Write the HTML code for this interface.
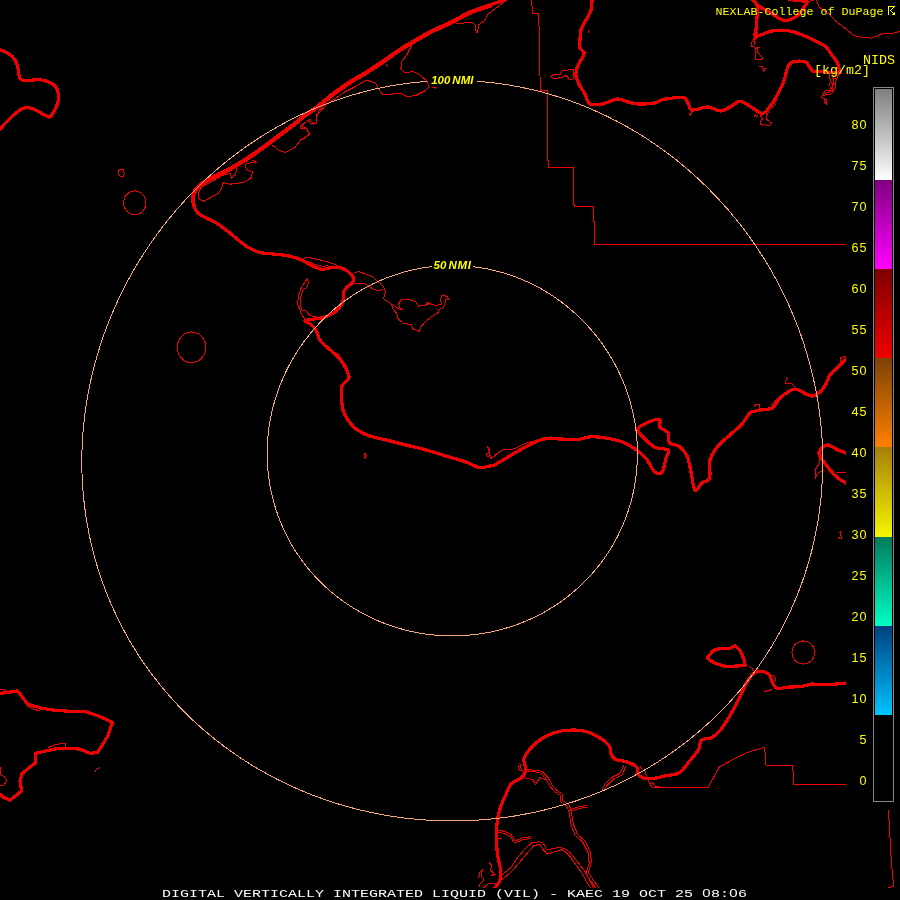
<!DOCTYPE html>
<html><head><meta charset="utf-8"><title>NEXLAB KAEC DVL</title>
<style>
html,body{margin:0;padding:0;background:#000;}
body{width:900px;height:900px;overflow:hidden;position:relative;}
svg{position:absolute;left:0;top:0;display:block;will-change:transform;}
.thick path{fill:none;stroke:#f00000;stroke-width:3.2;stroke-linejoin:round;stroke-linecap:round;shape-rendering:crispEdges;}
.thin path{fill:none;stroke:#f00000;stroke-width:1;stroke-linejoin:round;shape-rendering:crispEdges;}
.ring{fill:none;stroke:#f8a67e;stroke-width:1;shape-rendering:crispEdges;}
.lab{font-family:"Liberation Mono",monospace;font-size:13.33px;fill:#ff0;}
.z{font-family:"Liberation Sans",sans-serif;}
.lab2{font-family:"Liberation Sans",sans-serif;font-size:12.6px;fill:#ff0;}
.hdr{font-family:"Liberation Mono",monospace;font-size:11.67px;fill:#ff0;}
.nmi{font-family:"Liberation Sans",sans-serif;font-weight:bold;font-style:italic;font-size:11.5px;word-spacing:-1.2px;fill:#ff0;}
.ttl{font-family:"Liberation Mono",monospace;font-size:11.7px;fill:#fff;}
</style></head>
<body>
<svg width="900" height="900" viewBox="0 0 900 900">
<defs><linearGradient id="g0" x1="0" y1="0" x2="0" y2="1"><stop offset="0" stop-color="#7f7f7f"/><stop offset="1" stop-color="#ffffff"/></linearGradient><linearGradient id="g1" x1="0" y1="0" x2="0" y2="1"><stop offset="0" stop-color="#7f007f"/><stop offset="1" stop-color="#ff00ff"/></linearGradient><linearGradient id="g2" x1="0" y1="0" x2="0" y2="1"><stop offset="0" stop-color="#7f0000"/><stop offset="1" stop-color="#ee0000"/></linearGradient><linearGradient id="g3" x1="0" y1="0" x2="0" y2="1"><stop offset="0" stop-color="#7c4206"/><stop offset="1" stop-color="#ff8000"/></linearGradient><linearGradient id="g4" x1="0" y1="0" x2="0" y2="1"><stop offset="0" stop-color="#a67f08"/><stop offset="1" stop-color="#f6f600"/></linearGradient><linearGradient id="g5" x1="0" y1="0" x2="0" y2="1"><stop offset="0" stop-color="#007a5c"/><stop offset="1" stop-color="#00ffc4"/></linearGradient><linearGradient id="g6" x1="0" y1="0" x2="0" y2="1"><stop offset="0" stop-color="#00407f"/><stop offset="1" stop-color="#00c4ff"/></linearGradient>
<clipPath id="mapclip"><rect x="0" y="0" width="900" height="888"/></clipPath>
</defs>
<rect x="0" y="0" width="900" height="900" fill="#000"/>
<g clip-path="url(#mapclip)">
<g class="thin">
<path d="M119.0 170.5 C119.4 169.8 120.2 169.6 121.0 169.5 C121.8 169.4 123.0 168.9 123.5 170.0 C124.0 171.1 124.3 174.9 123.8 176.0 C123.3 177.1 121.3 176.8 120.5 176.5 C119.7 176.2 119.0 175.0 118.7 174.0 C118.5 173.0 118.6 171.2 119.0 170.5 Z"/>
<path d="M146.0 202.8 L145.6 205.9 L144.5 208.8 L142.7 211.2 L140.4 213.1 L137.7 214.3 L134.8 214.7 L131.9 214.3 L129.2 213.1 L126.9 211.2 L125.1 208.8 L124.0 205.9 L123.6 202.8 L124.0 199.7 L125.1 196.9 L126.9 194.4 L129.2 192.5 L131.9 191.3 L134.8 190.9 L137.7 191.3 L140.4 192.5 L142.7 194.4 L144.5 196.8 L145.6 199.7 Z"/>
<path d="M205.8 347.3 L205.3 351.3 L203.9 354.9 L201.6 358.1 L198.7 360.6 L195.2 362.1 L191.5 362.6 L187.8 362.1 L184.3 360.6 L181.4 358.1 L179.1 354.9 L177.7 351.3 L177.2 347.3 L177.7 343.3 L179.1 339.7 L181.4 336.5 L184.3 334.0 L187.8 332.5 L191.5 332.0 L195.2 332.5 L198.7 334.0 L201.6 336.5 L203.9 339.6 L205.3 343.3 Z"/>
<path d="M814.7 652.5 L814.3 655.5 L813.2 658.3 L811.4 660.7 L809.0 662.5 L806.3 663.7 L803.3 664.1 L800.3 663.7 L797.6 662.5 L795.2 660.7 L793.4 658.3 L792.3 655.5 L791.9 652.5 L792.3 649.5 L793.4 646.7 L795.2 644.3 L797.6 642.5 L800.3 641.3 L803.3 640.9 L806.3 641.3 L809.0 642.5 L811.4 644.3 L813.2 646.7 L814.3 649.5 Z"/>
<path d="M201.7 186.7 L198.3 193.3 L199.2 199.2 L204.2 201.3 L211.7 196.7 L218.3 193.3 L221.7 188.3 L223.3 182.5 L230.0 184.2 L243.3 182.5 L250.8 178.3 L252.5 171.7 L246.7 170.0 L245.0 164.2 L251.7 162.5 L256.7 162.5 L251.7 159.7"/>
<path d="M201.7 186.7 L211.7 181.7 L221.7 175.8 L230.0 173.3 L231.7 178.3 L235.8 173.3 L236.7 167.5"/>
<path d="M272.5 145.0 L278.3 150.0 L285.0 152.5 L295.0 147.5 L300.0 140.8 L306.7 136.7 L309.2 133.3 L306.7 128.3 L300.0 125.8 L310.0 119.2 L313.3 124.2 L316.7 123.3 L316.7 115.8 L321.7 110.0 L326.7 104.2"/>
<path d="M411.7 45.0 L406.7 55.0 L401.7 61.7 L400.8 68.3 L404.2 72.5 L413.3 71.7 L420.0 75.0 L426.7 80.8 L429.2 86.7 L425.0 90.8 L420.0 93.3 L415.0 95.8 L406.7 96.3 L400.0 93.0 L391.7 94.2 L382.5 94.2 L378.3 88.3 L375.8 83.3 L366.7 80.0 L355.0 86.7 L345.0 91.7 L333.3 100.0 L321.7 106.7 L316.7 115.0 L316.7 123.3 L310.0 123.3 L308.3 120.0 L300.0 128.3 L306.7 128.3 L309.2 135.0 L300.0 140.0"/>
<path d="M386.0 64.5 L387.5 67.0"/>
<path d="M431.5 87.5 L436.5 87.5 L435.5 89.0"/>
<path d="M456.0 24.0 L472.0 22.0 L475.0 25.0 L475.0 30.0 L477.4 33.0 L478.6 25.0 L485.0 20.0 L488.0 14.0 L499.0 6.0 L507.0 0.0"/>
<path d="M531.6 -1.0 L532.4 13.0 L538.6 13.0 L539.6 44.0 L540.0 76.0 L540.4 90.4 L547.5 90.4 L547.5 160.5 L548.5 161.0 L548.5 167.2 L573.5 167.2 L573.5 204.0 L574.5 204.5 L574.5 206.2 L593.5 206.2 L593.5 221.5 L594.5 222.0 L594.5 244.5 L846.5 244.5"/>
<path d="M550.0 76.4 L556.0 74.0 L560.0 75.0 L562.0 71.0 L568.0 70.0 L574.0 69.4 L573.0 79.0 L569.0 79.0 L566.0 75.0 L563.0 77.0 L558.0 78.0 L553.0 78.0 L550.0 76.4"/>
<path d="M588.0 30.0 L588.5 33.0"/>
<path d="M584.0 52.0 L587.0 53.0"/>
<path d="M806.7 1.8 L812.0 0.5 L816.4 -1.0"/>
<path d="M816.4 -1.0 L819.0 7.0 L829.0 14.2 L836.0 21.3 L845.0 28.4 L853.8 35.5 L862.7 37.3 L871.5 38.2 L882.0 33.8 L891.0 33.8 L898.0 32.0 L901.0 31.0"/>
<path d="M754.0 39.3 L751.0 43.7 L751.7 46.7 L753.7 47.0 L754.3 43.0 L755.3 42.3 Z"/>
<path d="M753.7 47.0 L755.3 48.3 L755.3 59.7 L761.0 59.7 L762.7 58.0 L757.3 51.7 L758.0 47.7 L759.5 47.3 L755.3 48.3"/>
<path d="M759.3 67.0 L762.0 66.5 L763.0 68.0 L766.0 69.0 L763.3 71.7 L762.7 69.0"/>
<path d="M830.0 73.3 L829.3 76.7 L830.7 81.3 L829.3 85.3 L831.3 87.3 L830.7 90.0 L825.3 90.7 L823.3 93.3 L821.3 97.3 L824.0 98.7 L824.7 102.0 L826.7 104.7 L826.7 99.3 L824.0 98.7"/>
<path d="M838.5 74.5 L837.3 76.7 L836.0 81.3 L835.3 87.3 L833.3 91.3 L831.3 94.0 L826.7 94.0 L823.3 96.0"/>
<path d="M834.0 74.5 L833.3 78.0 L833.3 83.3 L832.0 87.3 L832.7 90.0 L828.7 92.0 L825.3 93.3"/>
<path d="M832.0 78.7 L836.7 78.7"/>
<path d="M831.0 83.5 L835.5 85.0"/>
<path d="M760.0 115.3 L762.7 118.7 L761.3 120.0 L760.0 124.0 L762.7 125.3 L764.0 124.0 L766.7 125.3 L770.0 125.0 L771.7 123.3 L769.3 121.3 L766.7 119.3 L766.3 115.3 L769.3 111.3"/>
<path d="M754.3 116.7 L756.0 114.0"/>
<path d="M756.3 117.7 L758.0 115.3"/>
<path d="M771.3 108.7 L775.3 104.7 L774.0 102.0 L776.7 100.7"/>
<path d="M692.0 110.0 L690.5 116.0 L689.5 113.0"/>
<path d="M305.0 320.0 L300.8 312.5 L297.5 303.3 L299.2 293.3 L301.7 286.7 L307.5 278.3 L308.3 282.5 L307.0 287.5 L303.3 289.2 L300.8 296.7 L300.0 305.0 L302.5 310.8 L305.8 310.8 L310.0 315.8 L316.7 316.7"/>
<path d="M303.3 258.3 L308.3 257.5 L320.0 260.0 L330.0 262.5 L338.3 265.8"/>
<path d="M308.3 261.7 L316.7 265.0 L323.3 266.7 L328.3 265.0"/>
<path d="M354.0 273.0 L358.7 271.3 L364.7 274.0 L372.7 276.7 L376.7 280.7 L382.0 284.7 L384.7 288.7 L385.3 293.3 L383.3 298.7 L387.3 301.3 L391.3 304.0 L392.7 308.7 L396.7 313.3 L398.0 318.7 L403.3 323.3 L411.3 324.7 L412.7 328.7 L419.3 331.3 L420.7 327.3 L426.0 320.7 L432.7 316.0 L438.0 312.7 L439.3 309.3 L443.3 308.0 L444.7 304.0 L446.0 298.7 L448.7 300.0 L447.3 296.7 L442.0 294.7 L440.7 298.7 L441.3 304.7 L435.3 305.3 L431.3 304.0 L426.0 302.0 L428.7 304.0 L424.7 305.3 L418.7 306.3 L415.3 301.3 L408.7 299.3 L400.7 300.0 L398.7 304.0 L400.0 308.0 L402.7 309.3 L400.7 310.0 L395.3 306.7 L391.3 304.0"/>
<path d="M355.3 284.0 L363.3 283.3 L368.7 286.0 L373.3 289.3 L378.0 290.7 L383.3 289.3"/>
<path d="M364.0 454.0 L365.5 453.5 L366.5 456.0 L365.5 458.5 L364.0 457.5 Z"/>
<path d="M488.0 447.0 L489.0 449.0 L490.0 452.0 L487.0 453.5 L486.0 455.0 L488.0 457.0 L490.0 455.5 L492.0 458.0 L496.0 454.0 L504.0 449.4 L510.0 449.4"/>
<path d="M487.3 446.5 L489.0 451.0 L491.0 458.7 L502.0 450.1 L514.2 448.9 L524.0 444.0 L537.0 440.0 L550.9 436.7"/>
<path d="M338.0 357.0 L342.0 360.0 L346.0 366.0 L349.0 372.0 L347.0 369.0"/>
<path d="M336.7 353.0 L340.0 356.7 L343.3 362.0 L346.5 366.0"/>
<path d="M786.0 377.0 L787.5 378.5 L785.0 383.0 L792.0 384.0 L794.0 386.0 L796.0 388.0"/>
<path d="M754.0 406.5 L756.0 404.5 L760.0 405.0 L759.0 408.0"/>
<path d="M771.0 405.0 L776.0 400.0 L782.0 396.0 L788.0 394.0"/>
<path d="M840.0 362.0 L840.5 358.0 L844.0 356.5 L847.0 357.0"/>
<path d="M819.0 456.0 L819.0 464.0 L815.0 470.0 L815.0 479.0 L818.0 473.0 L824.0 470.0"/>
<path d="M836.0 472.5 L847.0 472.5"/>
<path d="M839.0 533.0 L840.5 532.0 L841.0 536.0 L842.0 538.0 L840.0 539.0 L838.5 537.0"/>
<path d="M763.5 692.1 L768.0 690.5 L772.0 689.7"/>
<path d="M748.8 666.5 L752.0 668.0 L754.0 671.0"/>
<path d="M769.0 675.0 L774.0 676.0 L776.0 680.0 L773.0 683.0"/>
<path d="M640.0 766.7 L645.0 772.0 L648.0 780.0 L652.2 787.5 L708.0 787.5 L719.5 766.7 L745.1 753.3 L764.7 747.1 L765.9 765.0 L792.8 765.0 L793.5 784.3 L846.5 784.3"/>
<path d="M651.5 781.8 L655.0 786.0 L660.0 787.0"/>
<path d="M888.5 810.2 L889.3 825.5 L890.3 843.2 L891.3 860.9 L892.4 873.1 L893.3 882.3 L893.3 886.6 L888.1 887.4"/>
<path d="M525.9 769.1 L533.3 770.2 L541.8 771.2 L548.1 777.6 L551.3 783.9 L556.6 790.2 L562.9 794.4 L562.9 800.8 L569.2 805.0 L571.3 811.3 L573.4 824.0 L577.7 834.6 L585.0 840.9 L590.3 851.4 L591.4 862.0 L588.2 872.6 L592.4 878.9 L598.8 887.3 L600.0 890.0"/>
<path d="M523.7 770.3 L531.1 771.4 L539.6 772.4 L545.9 778.8 L549.1 785.1 L554.4 791.4 L560.7 795.6 L560.7 802.0 L567.0 806.2 L569.1 812.5 L571.2 825.2 L575.5 835.8 L582.8 842.1 L588.1 852.6 L589.2 863.2 L586.0 873.8 L590.2 880.1 L596.6 888.5 L597.8 891.2"/>
<path d="M571.3 809.2 L577.7 807.1 L587.2 805.0"/>
<path d="M572.0 811.0 L578.0 809.0 L587.5 806.8"/>
<path d="M522.8 777.6 L533.3 779.7 L535.4 784.9 L539.7 777.6 L546.0 779.7"/>
<path d="M519.6 762.8 L521.0 768.0 L522.8 771.2 L519.0 770.0 L518.0 765.0"/>
<path d="M624.1 764.9 L619.9 773.3 L611.4 777.6 L605.1 783.9 L601.9 790.2"/>
<path d="M626.0 766.0 L622.0 775.0 L613.5 779.0 L607.0 785.5 L604.0 790.5"/>
<path d="M498.5 830.3 L504.8 831.4 L511.2 834.6 L515.4 840.9 L522.8 837.7 L531.2 836.7"/>
<path d="M498.5 832.3 L504.5 833.4 L510.0 836.6 L514.8 843.0 L523.0 839.7 L531.2 838.2"/>
<path d="M497.0 839.0 L502.0 838.5"/>
<path d="M500.5 876.0 L503.4 873.6 L510.4 868.2 L516.7 858.9 L524.4 849.5 L532.2 842.5 L540.0 841.8 L544.7 844.9 L546.2 849.5 L552.4 848.8 L560.2 847.2 L566.4 849.5 L570.0 852.6 L578.5 863.0 L585.0 871.5 L589.5 880.0 L593.5 887.3 L595.0 890.0"/>
<path d="M500.5 880.5 L503.4 878.3 L510.4 872.9 L519.8 862.0 L527.6 852.7 L533.8 845.7 L540.0 844.1 L543.1 849.6 L547.8 854.2 L554.0 851.9 L561.8 849.6 L566.4 852.7 L570.0 856.6 L576.5 865.5 L582.5 874.0 L586.5 882.0 L590.5 888.0 L591.5 890.0"/>
<path d="M478.4 878.0 L480.0 872.0 L483.0 869.0 L481.0 875.0 L484.0 880.0 L480.0 884.0 L479.0 887.0"/>
<path d="M489.0 862.0 L492.0 866.0 L490.0 870.0 L494.0 873.0 L491.0 876.0 L496.0 874.0"/>
<path d="M482.0 889.0 L488.0 884.0 L495.0 883.0"/>
<path d="M0.0 766.7 L0.8 775.0 L5.0 776.7 L6.7 780.8 L4.2 785.0 L0.0 785.0"/>
<path d="M95.0 771.7 L97.0 769.0 L100.0 767.5"/>
<path d="M48.3 747.5 L55.0 744.5 L65.0 743.3 L65.5 747.0"/>
<path d="M27.5 706.0 L33.0 709.0 L40.0 711.0"/>
<path d="M0.0 690.0 L4.0 689.5 L7.0 691.0"/>
</g>
<g class="thick">
<path d="M-2.0 49.0 C-1.7 49.1 -1.4 49.1 0.0 49.7 C1.4 50.3 4.6 51.3 6.7 52.5 C8.8 53.7 10.8 54.9 12.5 56.7 C14.2 58.5 15.7 60.8 16.7 63.3 C17.7 65.8 18.2 69.2 18.7 71.7 C19.2 74.2 18.6 76.8 19.7 78.3 C20.8 79.8 22.7 80.5 25.0 80.8 C27.3 81.1 30.5 80.1 33.3 80.0 C36.1 79.9 38.9 79.6 41.7 80.0 C44.5 80.4 47.6 81.4 50.0 82.5 C52.4 83.6 54.4 84.9 55.8 86.7 C57.2 88.5 57.9 91.1 58.3 93.3 C58.7 95.5 58.7 97.5 58.3 100.0 C57.9 102.5 56.9 105.8 55.8 108.3 C54.7 110.8 52.8 113.5 51.7 115.0 C50.6 116.5 51.2 117.4 49.2 117.0 C47.2 116.6 42.9 114.0 40.0 112.5 C37.1 111.0 34.5 109.0 31.7 108.3 C28.9 107.6 25.8 107.6 23.3 108.3 C20.8 109.0 19.2 110.5 16.7 112.5 C14.2 114.5 11.1 117.2 8.3 120.0 C5.5 122.8 1.7 127.2 0.0 129.0 C-1.7 130.8 -1.7 130.7 -2.0 131.0"/>
<path d="M505.0 -2.0 C504.8 -1.7 506.5 -1.2 504.0 0.0 C501.5 1.2 495.7 3.0 490.0 5.0 C484.3 7.0 476.7 9.1 470.0 12.0 C463.3 14.9 456.1 19.5 450.0 22.5 C443.9 25.5 438.9 27.2 433.3 30.0 C427.8 32.8 422.2 36.0 416.7 39.2 C411.1 42.4 405.6 45.6 400.0 49.2 C394.4 52.8 388.9 57.0 383.3 60.8 C377.8 64.5 372.2 68.2 366.7 71.7 C361.1 75.2 355.6 78.1 350.0 81.7 C344.4 85.3 338.9 89.1 333.3 93.3 C327.8 97.5 322.2 102.5 316.7 106.7 C311.1 110.9 303.3 115.8 300.0 118.3 C296.7 120.8 300.0 119.1 296.7 121.7 C293.4 124.3 285.6 130.0 280.0 134.2 C274.4 138.4 268.9 142.7 263.3 146.7 C257.8 150.7 252.2 154.7 246.7 158.3 C241.1 161.9 235.6 165.2 230.0 168.3 C224.4 171.4 218.0 174.2 213.3 176.7 C208.6 179.2 204.8 181.1 201.7 183.3 C198.6 185.5 196.5 187.5 195.0 190.0 C193.5 192.5 192.6 195.5 192.5 198.3 C192.4 201.1 193.2 204.2 194.2 206.7 C195.2 209.2 196.2 211.4 198.3 213.3 C200.4 215.2 203.6 216.6 206.7 218.3 C209.8 220.0 213.1 221.1 216.7 223.3 C220.3 225.5 224.7 228.9 228.3 231.7 C231.9 234.5 235.0 237.4 238.3 240.0 C241.6 242.6 244.7 245.4 248.3 247.5 C251.9 249.6 255.6 251.4 260.0 252.5 C264.4 253.6 270.3 253.6 275.0 254.2 C279.7 254.8 283.9 254.8 288.3 255.8 C292.8 256.8 297.8 258.3 301.7 260.0 C305.6 261.7 308.4 264.3 311.7 265.8 C315.0 267.3 318.4 268.9 321.7 269.2 C325.0 269.5 328.6 267.8 331.7 267.5 C334.8 267.2 337.2 266.8 340.0 267.5 C342.8 268.2 346.1 270.0 348.3 271.7 C350.5 273.4 352.6 275.7 353.3 277.5 C354.0 279.3 353.6 280.8 352.5 282.5 C351.4 284.2 348.2 285.7 346.7 287.5 C345.2 289.3 343.9 291.2 343.3 293.3 C342.7 295.4 343.9 297.8 343.3 300.0 C342.8 302.2 341.7 304.5 340.0 306.7 C338.3 308.9 336.1 311.5 333.3 313.3 C330.5 315.1 326.6 316.5 323.3 317.5 C320.0 318.5 316.4 318.6 313.3 319.2 C310.2 319.8 305.3 319.8 305.0 320.8 C304.7 321.8 309.8 323.2 311.7 325.0 C313.6 326.8 315.3 329.2 316.7 331.7 C318.1 334.2 318.1 337.2 320.0 340.0 C321.9 342.8 325.3 345.5 328.3 348.3 C331.3 351.1 335.2 353.9 338.0 357.0 C340.8 360.1 343.2 363.5 345.0 367.0 C346.8 370.5 349.5 374.8 349.0 378.0 C348.5 381.2 343.2 382.7 342.0 386.0 C340.8 389.3 341.4 394.0 341.6 398.0 C341.8 402.0 341.9 406.3 343.0 410.0 C344.1 413.7 345.8 416.8 348.0 420.0 C350.2 423.2 352.3 426.3 356.0 429.0 C359.7 431.7 365.0 434.2 370.0 436.0 C375.0 437.8 380.0 438.5 386.0 440.0 C392.0 441.5 399.3 443.3 406.0 445.0 C412.7 446.7 419.3 448.2 426.0 450.0 C432.7 451.8 439.3 454.0 446.0 456.0 C452.7 458.0 460.5 460.1 466.0 462.0 C471.5 463.9 475.0 466.7 479.0 467.4 C483.0 468.1 487.4 466.4 490.0 466.0 C492.6 465.6 491.5 466.4 494.7 464.8 C497.9 463.2 503.6 459.5 509.3 456.2 C515.0 452.9 523.2 448.0 528.9 445.2 C534.6 442.4 537.9 440.1 543.6 439.1 C549.3 438.1 557.4 439.0 563.1 439.1 C568.8 439.2 573.1 440.0 577.8 439.6 C582.5 439.2 585.5 436.8 591.2 436.7 C596.9 436.6 606.5 438.1 612.0 439.1 C617.5 440.1 620.1 441.0 624.2 442.8 C628.3 444.6 632.8 447.5 636.5 450.1 C640.2 452.8 643.2 455.0 646.3 458.7 C649.3 462.4 652.1 469.9 654.8 472.1 C657.4 474.3 660.4 474.3 662.2 472.1 C664.0 469.9 664.8 462.4 665.8 458.7 C666.8 455.0 669.9 451.9 668.3 450.1 C666.7 448.3 659.7 449.3 656.0 447.7 C652.3 446.1 649.3 443.4 646.3 440.3 C643.2 437.2 637.3 432.4 637.7 429.3 C638.1 426.2 645.0 423.6 648.7 422.0 C652.4 420.4 657.9 418.8 659.7 419.6 C661.5 420.4 658.3 424.7 659.7 426.9 C661.1 429.1 666.7 430.4 668.3 433.0 C669.9 435.6 667.7 440.6 669.5 442.8 C671.3 445.1 676.4 444.3 679.3 446.5 C682.2 448.7 685.0 451.8 687.0 456.0 C689.0 460.2 689.7 466.3 691.0 472.0 C692.3 477.7 693.2 488.2 695.0 490.0 C696.8 491.8 699.6 485.0 702.0 483.0 C704.4 481.0 708.3 481.8 709.6 478.0 C710.9 474.2 708.6 465.3 710.0 460.0 C711.4 454.7 714.7 450.2 718.0 446.0 C721.3 441.8 726.0 438.7 730.0 435.0 C734.0 431.3 738.7 427.7 742.0 424.0 C745.3 420.3 747.0 415.3 750.0 413.0 C753.0 410.7 756.3 410.8 760.0 410.0 C763.7 409.2 768.7 410.0 772.0 408.0 C775.3 406.0 777.3 400.7 780.0 398.0 C782.7 395.3 785.3 393.5 788.0 392.0 C790.7 390.5 793.3 388.8 796.0 389.0 C798.7 389.2 801.3 391.8 804.0 393.0 C806.7 394.2 809.3 396.2 812.0 396.0 C814.7 395.8 817.7 394.0 820.0 392.0 C822.3 390.0 824.3 386.8 826.0 384.0 C827.7 381.2 828.0 377.8 830.0 375.0 C832.0 372.2 835.5 369.5 838.0 367.0 C840.5 364.5 843.3 361.7 845.0 360.0 C846.7 358.3 847.5 357.5 848.0 357.0"/>
<path d="M490.6 5.9 C487.3 7.1 477.3 10.0 470.6 12.9 C463.9 15.8 456.7 20.4 450.6 23.4 C444.5 26.4 439.5 28.1 433.9 30.9 C428.4 33.7 422.9 36.9 417.3 40.1 C411.8 43.3 406.2 46.5 400.6 50.1 C395.0 53.7 389.5 57.9 383.9 61.7 C378.4 65.5 372.9 69.1 367.3 72.6 C361.8 76.1 356.2 79.0 350.6 82.6 C345.0 86.2 339.5 90.0 333.9 94.2 C328.4 98.4 322.9 103.4 317.3 107.6 C311.8 111.8 303.9 116.7 300.6 119.2 C297.3 121.7 300.6 120.0 297.3 122.6 C294.0 125.2 286.2 130.9 280.6 135.1 C275.0 139.3 269.5 143.6 263.9 147.6 C258.4 151.6 252.8 155.6 247.3 159.2 C241.7 162.8 236.2 166.1 230.6 169.2 C225.0 172.3 218.6 175.1 213.9 177.6 C209.2 180.1 205.3 182.0 202.3 184.2 C199.2 186.4 197.1 188.4 195.6 190.9 C194.1 193.4 193.2 196.4 193.1 199.2 C193.0 202.0 194.5 206.2 194.8 207.6"/>
<path d="M592.0 -2.0 C592.0 -1.7 592.2 -2.0 592.0 0.0 C591.8 2.0 592.0 6.7 591.0 10.0 C590.0 13.3 587.7 16.7 586.0 20.0 C584.3 23.3 582.0 26.7 581.0 30.0 C580.0 33.3 580.2 37.0 580.0 40.0 C579.8 43.0 579.3 45.8 580.0 48.0 C580.7 50.2 583.8 51.0 584.0 53.0 C584.2 55.0 582.2 57.5 581.0 60.0 C579.8 62.5 577.8 65.3 577.0 68.0 C576.2 70.7 575.5 73.0 576.0 76.0 C576.5 79.0 578.5 83.0 580.0 86.0 C581.5 89.0 583.3 91.0 585.0 94.0 C586.7 97.0 587.2 102.3 590.0 104.0 C592.8 105.7 597.3 104.8 602.0 104.0 C606.7 103.2 613.7 99.3 618.0 99.0 C622.3 98.7 624.7 101.2 628.0 102.0 C631.3 102.8 633.7 103.8 638.0 104.0 C642.3 104.2 649.7 103.8 654.0 103.0 C658.3 102.2 659.2 100.3 664.0 99.4 C668.8 98.5 679.0 96.8 683.0 97.4 C687.0 98.0 686.5 100.9 688.0 103.0 C689.5 105.1 688.7 109.3 692.0 110.0 C695.3 110.7 703.3 106.8 708.0 107.0 C712.7 107.2 716.3 111.0 720.0 111.0 C723.7 111.0 726.7 108.6 730.0 107.0 C733.3 105.4 736.5 101.5 740.0 101.5 C743.5 101.5 747.0 104.7 750.7 106.7 C754.5 108.7 759.1 113.8 762.5 113.5 C765.9 113.2 768.3 108.5 771.0 105.0 C773.7 101.5 776.5 96.6 778.7 92.4 C780.9 88.2 782.8 84.1 784.3 80.0 C785.8 75.9 786.1 70.6 787.5 67.6 C788.9 64.6 789.5 62.9 792.5 62.0 C795.5 61.1 802.2 60.5 805.5 62.0 C808.8 63.5 810.1 69.2 812.5 70.8 C814.9 72.4 815.6 71.3 820.0 71.6 C824.4 71.9 835.4 72.6 838.7 72.5 C842.0 72.4 839.9 72.8 839.6 71.0 C839.3 69.2 838.3 64.7 837.0 62.0 C835.7 59.3 833.6 57.5 831.8 55.0 C830.0 52.5 828.6 49.2 826.2 47.0 C823.8 44.8 820.9 43.6 817.5 41.8 C814.1 40.0 810.4 38.2 805.8 36.4 C801.2 34.6 795.4 31.9 789.8 31.0 C784.2 30.1 777.6 30.1 772.0 31.0 C766.4 31.9 758.7 36.6 756.0 36.4 C753.3 36.2 755.8 33.1 756.0 30.0 C756.2 26.9 756.8 21.9 757.0 17.8 C757.2 13.7 758.0 8.6 757.0 5.3 C756.0 2.0 752.0 -0.8 751.0 -2.0"/>
<path d="M750.7 -2.0 C751.9 -0.8 754.6 2.9 757.8 5.3 C761.0 7.7 765.6 9.9 770.0 12.4 C774.4 14.9 779.9 19.8 784.4 20.4 C788.9 21.0 793.7 18.2 797.0 16.0 C800.3 13.8 802.4 9.4 804.0 7.0 C805.6 4.6 807.9 2.9 806.7 1.8 C805.5 0.7 800.1 1.0 797.0 0.5 C793.9 0.0 789.5 -0.8 788.0 -1.0"/>
<path d="M756.5 33.0 L755.0 38.3"/>
<path d="M848.0 453.3 C847.7 453.2 847.7 453.6 846.0 453.0 C844.3 452.4 841.0 451.3 838.0 450.0 C835.0 448.7 830.7 445.3 828.0 445.0 C825.3 444.7 823.5 446.7 822.0 448.0 C820.5 449.3 819.3 451.7 819.0 453.0 C818.7 454.3 819.2 454.5 820.0 456.0 C820.8 457.5 822.3 459.7 824.0 462.0 C825.7 464.3 827.7 467.3 830.0 470.0 C832.3 472.7 835.3 475.8 838.0 478.0 C840.7 480.2 844.3 482.0 846.0 483.0 C847.7 484.0 847.7 483.8 848.0 484.0"/>
<path d="M707.2 657.9 L713.3 650.6 L720.7 648.1 L730.5 648.1 L735.4 645.7 L740.2 650.6 L743.9 659.1 L745.1 665.2 L737.8 666.0 L725.6 666.5 L715.8 663.5 L709.7 660.3 Z"/>
<path d="M848.0 683.0 C847.6 683.0 847.5 682.9 845.4 683.1 C843.3 683.3 839.3 683.8 835.6 684.1 C831.9 684.4 827.5 684.8 823.4 684.8 C819.3 684.8 814.8 683.8 811.1 684.1 C807.4 684.4 805.5 686.0 801.4 686.5 C797.3 687.0 790.8 686.9 786.7 687.2 C782.6 687.5 779.4 689.5 776.9 688.5 C774.4 687.5 773.2 683.4 772.0 681.1 C770.8 678.9 771.2 676.6 769.6 675.0 C768.0 673.4 764.7 671.7 762.2 671.3 C759.8 670.9 757.3 671.0 754.9 672.6 C752.5 674.2 750.0 677.2 747.6 681.1 C745.2 685.0 742.7 690.9 740.2 695.8 C737.8 700.7 735.3 706.0 732.9 710.5 C730.5 715.0 728.0 719.0 725.6 722.7 C723.2 726.4 720.7 730.0 718.2 732.5 C715.8 735.0 713.8 736.5 710.9 737.8 C708.0 739.1 703.1 738.3 701.1 740.3 C699.1 742.3 700.7 746.0 698.7 749.6 C696.7 753.2 692.2 757.9 688.9 761.8 C685.6 765.7 683.2 770.4 679.1 772.8 C675.0 775.2 669.3 775.0 664.4 776.0 C659.5 777.0 654.0 779.0 649.8 778.9 C645.5 778.8 641.1 777.4 638.9 775.4 C636.7 773.4 638.9 769.3 636.8 767.0 C634.7 764.7 629.7 762.9 626.2 761.7 C622.7 760.5 618.2 760.8 615.7 759.6 C613.2 758.4 612.5 756.6 611.4 754.3 C610.3 752.0 611.0 748.5 609.3 745.9 C607.5 743.3 604.4 740.8 600.9 738.5 C597.4 736.2 592.4 733.6 588.2 732.2 C584.0 730.8 580.2 730.3 575.6 730.1 C571.0 729.9 565.4 730.2 560.8 731.1 C556.2 732.0 552.0 733.5 548.1 735.3 C544.2 737.1 540.8 739.2 537.6 741.7 C534.4 744.2 531.4 747.1 529.1 750.1 C526.8 753.1 524.3 756.4 523.8 759.6 C523.3 762.8 526.2 766.1 525.9 769.1 C525.5 772.1 524.2 775.1 521.7 777.6 C519.2 780.1 513.8 781.1 511.2 783.9 C508.6 786.7 507.7 790.5 505.9 794.4 C504.1 798.3 502.0 802.9 500.6 807.1 C499.2 811.3 498.1 814.9 497.4 819.8 C496.7 824.7 496.4 831.1 496.4 836.7 C496.4 842.3 496.7 848.0 497.4 853.6 C498.1 859.2 500.2 865.8 500.6 870.4 C501.0 875.0 500.5 878.2 499.6 881.0 C498.7 883.8 496.4 885.6 495.3 887.3 C494.2 889.0 493.4 890.4 493.0 891.0"/>
<path d="M-2.0 693.5 L0.0 693.3 L8.3 692.5 L17.5 690.8 L23.3 698.3 L27.5 704.2 L41.7 708.3 L55.0 710.3 L70.0 711.3 L85.8 711.7 L98.3 715.8 L112.5 722.5 L108.3 735.0 L103.3 743.3 L97.5 752.5 L90.0 753.3 L80.0 749.2 L70.0 748.3 L58.3 748.3 L46.7 750.8 L35.8 753.3 L35.0 763.3 L28.3 768.3 L21.7 774.2 L20.0 781.7 L21.7 790.8 L16.7 795.0 L10.0 800.0 L3.3 797.5 L0.0 794.2 L-2.0 793.0"/>
</g>
<path class="ring" d="M477.4 81.4 L480.5 81.6 L483.6 81.9 L486.7 82.2 L489.9 82.5 L493.0 82.8 L496.1 83.2 L499.2 83.6 L502.3 84.1 L505.4 84.5 L508.5 85.0 L511.6 85.5 L514.7 86.1 L517.8 86.6 L520.9 87.3 L524.0 87.9 L527.1 88.5 L530.1 89.2 L533.2 89.9 L536.3 90.7 L539.3 91.4 L542.4 92.2 L545.4 93.1 L548.4 93.9 L551.5 94.8 L554.5 95.7 L557.5 96.6 L560.5 97.6 L563.5 98.6 L566.5 99.6 L569.5 100.6 L572.5 101.7 L575.4 102.8 L578.4 103.9 L581.3 105.0 L584.3 106.2 L587.2 107.4 L590.1 108.6 L593.0 109.9 L595.9 111.2 L598.8 112.5 L601.7 113.8 L604.6 115.1 L607.5 116.5 L610.3 117.9 L613.1 119.4 L616.0 120.8 L618.8 122.3 L621.6 123.8 L624.4 125.3 L627.2 126.9 L629.9 128.5 L632.7 130.1 L635.4 131.7 L638.2 133.3 L640.9 135.0 L643.6 136.7 L646.3 138.4 L649.0 140.2 L651.6 142.0 L654.3 143.7 L656.9 145.6 L659.5 147.4 L662.1 149.3 L664.7 151.2 L667.3 153.1 L669.9 155.0 L672.4 157.0 L675.0 158.9 L677.5 160.9 L680.0 163.0 L682.5 165.0 L684.9 167.1 L687.4 169.2 L689.8 171.3 L692.2 173.4 L694.6 175.6 L697.0 177.7 L699.4 179.9 L701.7 182.1 L704.1 184.4 L706.4 186.6 L708.7 188.9 L710.9 191.2 L713.2 193.5 L715.4 195.8 L717.6 198.2 L719.9 200.6 L722.0 203.0 L724.2 205.4 L726.3 207.8 L728.5 210.2 L730.6 212.7 L732.6 215.2 L734.7 217.7 L736.8 220.2 L738.8 222.8 L740.8 225.3 L742.8 227.9 L744.7 230.5 L746.7 233.1 L748.6 235.7 L750.5 238.3 L752.4 241.0 L754.2 243.7 L756.0 246.3 L757.8 249.0 L759.6 251.8 L761.4 254.5 L763.1 257.2 L764.9 260.0 L766.6 262.8 L768.2 265.6 L769.9 268.4 L771.5 271.2 L773.1 274.0 L774.7 276.9 L776.3 279.7 L777.8 282.6 L779.3 285.5 L780.8 288.4 L782.3 291.3 L783.7 294.2 L785.1 297.2 L786.5 300.1 L787.9 303.1 L789.2 306.0 L790.5 309.0 L791.8 312.0 L793.1 315.0 L794.3 318.0 L795.6 321.0 L796.7 324.1 L797.9 327.1 L799.0 330.2 L800.2 333.2 L801.3 336.3 L802.3 339.4 L803.4 342.4 L804.4 345.5 L805.3 348.6 L806.3 351.8 L807.2 354.9 L808.1 358.0 L809.0 361.1 L809.9 364.3 L810.7 367.4 L811.5 370.6 L812.3 373.7 L813.0 376.9 L813.7 380.1 L814.4 383.2 L815.1 386.4 L815.7 389.6 L816.3 392.8 L816.9 396.0 L817.5 399.2 L818.0 402.4 L818.5 405.6 L819.0 408.8 L819.4 412.0 L819.8 415.2 L820.2 418.4 L820.6 421.7 L820.9 424.9 L821.2 428.1 L821.5 431.3 L821.8 434.5 L822.0 437.8 L822.2 441.0 L822.4 444.2 L822.5 447.5 L822.6 450.7 L822.7 453.9 L822.7 457.2 L822.8 460.4 L822.8 463.6 L822.7 466.9 L822.7 470.1 L822.6 473.3 L822.5 476.5 L822.3 479.7 L822.1 483.0 L821.9 486.2 L821.7 489.4 L821.5 492.6 L821.2 495.8 L820.9 499.0 L820.5 502.2 L820.1 505.4 L819.7 508.6 L819.3 511.8 L818.8 515.0 L818.4 518.2 L817.9 521.3 L817.3 524.5 L816.7 527.7 L816.1 530.8 L815.5 534.0 L814.9 537.1 L814.2 540.3 L813.5 543.4 L812.7 546.5 L812.0 549.6 L811.2 552.8 L810.3 555.9 L809.5 559.0 L808.6 562.0 L807.7 565.1 L806.8 568.2 L805.8 571.2 L804.8 574.3 L803.8 577.3 L802.7 580.4 L801.7 583.4 L800.6 586.4 L799.4 589.4 L798.3 592.4 L797.1 595.4 L795.9 598.3 L794.7 601.3 L793.4 604.2 L792.1 607.2 L790.8 610.1 L789.4 613.0 L788.1 615.9 L786.7 618.8 L785.3 621.7 L783.8 624.5 L782.3 627.4 L780.8 630.2 L779.3 633.0 L777.7 635.8 L776.2 638.6 L774.6 641.4 L772.9 644.2 L771.3 646.9 L769.6 649.6 L767.9 652.4 L766.1 655.1 L764.4 657.7 L762.6 660.4 L760.8 663.1 L759.0 665.7 L757.1 668.3 L755.2 670.9 L753.3 673.5 L751.4 676.1 L749.4 678.6 L747.4 681.2 L745.4 683.7 L743.4 686.2 L741.4 688.7 L739.3 691.2 L737.2 693.6 L735.1 696.0 L732.9 698.4 L730.8 700.8 L728.6 703.2 L726.4 705.6 L724.2 707.9 L721.9 710.2 L719.6 712.5 L717.3 714.8 L715.0 717.0 L712.7 719.3 L710.3 721.5 L707.9 723.7 L705.5 725.8 L703.1 728.0 L700.7 730.1 L698.2 732.2 L695.7 734.3 L693.2 736.4 L690.7 738.4 L688.2 740.5 L685.6 742.5 L683.0 744.4 L680.4 746.4 L677.8 748.3 L675.2 750.2 L672.5 752.1 L669.8 754.0 L667.2 755.8 L664.5 757.7 L661.7 759.4 L659.0 761.2 L656.2 763.0 L653.5 764.7 L650.7 766.4 L647.9 768.1 L645.0 769.7 L642.2 771.3 L639.3 772.9 L636.5 774.5 L633.6 776.1 L630.7 777.6 L627.8 779.1 L624.8 780.6 L621.9 782.0 L619.0 783.5 L616.0 784.9 L613.0 786.3 L610.0 787.6 L607.0 788.9 L604.0 790.2 L600.9 791.5 L597.9 792.8 L594.8 794.0 L591.8 795.2 L588.7 796.4 L585.6 797.5 L582.5 798.6 L579.4 799.7 L576.2 800.8 L573.1 801.8 L570.0 802.8 L566.8 803.8 L563.6 804.8 L560.5 805.7 L557.3 806.6 L554.1 807.5 L550.9 808.3 L547.7 809.2 L544.5 810.0 L541.2 810.7 L538.0 811.5 L534.8 812.2 L531.5 812.9 L528.3 813.5 L525.0 814.1 L521.7 814.8 L518.5 815.3 L515.2 815.9 L511.9 816.4 L508.6 816.9 L505.3 817.3 L502.1 817.8 L498.8 818.2 L495.5 818.6 L492.1 818.9 L488.8 819.2 L485.5 819.5 L482.2 819.8 L478.9 820.0 L475.6 820.3 L472.3 820.4 L468.9 820.6 L465.6 820.7 L462.3 820.8 L459.0 820.9 L455.6 820.9 L452.3 821.0 L449.0 820.9 L445.6 820.9 L442.3 820.8 L439.0 820.7 L435.7 820.6 L432.3 820.4 L429.0 820.3 L425.7 820.0 L422.4 819.8 L419.1 819.5 L415.8 819.2 L412.5 818.9 L409.1 818.6 L405.8 818.2 L402.5 817.8 L399.3 817.3 L396.0 816.9 L392.7 816.4 L389.4 815.9 L386.1 815.3 L382.9 814.8 L379.6 814.1 L376.3 813.5 L373.1 812.9 L369.8 812.2 L366.6 811.5 L363.4 810.7 L360.1 810.0 L356.9 809.2 L353.7 808.3 L350.5 807.5 L347.3 806.6 L344.1 805.7 L341.0 804.8 L337.8 803.8 L334.6 802.8 L331.5 801.8 L328.4 800.8 L325.2 799.7 L322.1 798.6 L319.0 797.5 L315.9 796.4 L312.8 795.2 L309.8 794.0 L306.7 792.8 L303.7 791.5 L300.6 790.2 L297.6 788.9 L294.6 787.6 L291.6 786.3 L288.6 784.9 L285.6 783.5 L282.7 782.0 L279.8 780.6 L276.8 779.1 L273.9 777.6 L271.0 776.1 L268.1 774.5 L265.3 772.9 L262.4 771.3 L259.6 769.7 L256.7 768.1 L253.9 766.4 L251.1 764.7 L248.4 763.0 L245.6 761.2 L242.9 759.4 L240.1 757.7 L237.4 755.8 L234.8 754.0 L232.1 752.1 L229.4 750.2 L226.8 748.3 L224.2 746.4 L221.6 744.4 L219.0 742.5 L216.4 740.5 L213.9 738.4 L211.4 736.4 L208.9 734.3 L206.4 732.2 L203.9 730.1 L201.5 728.0 L199.1 725.8 L196.7 723.7 L194.3 721.5 L191.9 719.3 L189.6 717.0 L187.3 714.8 L185.0 712.5 L182.7 710.2 L180.4 707.9 L178.2 705.6 L176.0 703.2 L173.8 700.8 L171.7 698.4 L169.5 696.0 L167.4 693.6 L165.3 691.2 L163.2 688.7 L161.2 686.2 L159.2 683.7 L157.2 681.2 L155.2 678.6 L153.2 676.1 L151.3 673.5 L149.4 670.9 L147.5 668.3 L145.6 665.7 L143.8 663.1 L142.0 660.4 L140.2 657.7 L138.5 655.1 L136.7 652.4 L135.0 649.6 L133.3 646.9 L131.7 644.2 L130.0 641.4 L128.4 638.6 L126.9 635.8 L125.3 633.0 L123.8 630.2 L122.3 627.4 L120.8 624.5 L119.3 621.7 L117.9 618.8 L116.5 615.9 L115.2 613.0 L113.8 610.1 L112.5 607.2 L111.2 604.2 L109.9 601.3 L108.7 598.3 L107.5 595.4 L106.3 592.4 L105.2 589.4 L104.0 586.4 L102.9 583.4 L101.9 580.4 L100.8 577.3 L99.8 574.3 L98.8 571.2 L97.8 568.2 L96.9 565.1 L96.0 562.0 L95.1 559.0 L94.3 555.9 L93.4 552.8 L92.6 549.6 L91.9 546.5 L91.1 543.4 L90.4 540.3 L89.7 537.1 L89.1 534.0 L88.5 530.8 L87.9 527.7 L87.3 524.5 L86.7 521.3 L86.2 518.2 L85.8 515.0 L85.3 511.8 L84.9 508.6 L84.5 505.4 L84.1 502.2 L83.7 499.0 L83.4 495.8 L83.1 492.6 L82.9 489.4 L82.7 486.2 L82.5 483.0 L82.3 479.7 L82.1 476.5 L82.0 473.3 L81.9 470.1 L81.9 466.9 L81.8 463.6 L81.8 460.4 L81.9 457.2 L81.9 453.9 L82.0 450.7 L82.1 447.5 L82.2 444.2 L82.4 441.0 L82.6 437.8 L82.8 434.5 L83.1 431.3 L83.4 428.1 L83.7 424.9 L84.0 421.7 L84.4 418.4 L84.8 415.2 L85.2 412.0 L85.6 408.8 L86.1 405.6 L86.6 402.4 L87.1 399.2 L87.7 396.0 L88.3 392.8 L88.9 389.6 L89.5 386.4 L90.2 383.2 L90.9 380.1 L91.6 376.9 L92.3 373.7 L93.1 370.6 L93.9 367.4 L94.7 364.3 L95.6 361.1 L96.5 358.0 L97.4 354.9 L98.3 351.8 L99.3 348.6 L100.2 345.5 L101.2 342.4 L102.3 339.4 L103.3 336.3 L104.4 333.2 L105.6 330.2 L106.7 327.1 L107.9 324.1 L109.0 321.0 L110.3 318.0 L111.5 315.0 L112.8 312.0 L114.1 309.0 L115.4 306.0 L116.7 303.1 L118.1 300.1 L119.5 297.2 L120.9 294.2 L122.3 291.3 L123.8 288.4 L125.3 285.5 L126.8 282.6 L128.3 279.7 L129.9 276.9 L131.5 274.0 L133.1 271.2 L134.7 268.4 L136.4 265.6 L138.0 262.8 L139.7 260.0 L141.5 257.2 L143.2 254.5 L145.0 251.8 L146.8 249.0 L148.6 246.3 L150.4 243.7 L152.2 241.0 L154.1 238.3 L156.0 235.7 L157.9 233.1 L159.9 230.5 L161.8 227.9 L163.8 225.3 L165.8 222.8 L167.8 220.2 L169.9 217.7 L172.0 215.2 L174.0 212.7 L176.1 210.2 L178.3 207.8 L180.4 205.4 L182.6 203.0 L184.7 200.6 L187.0 198.2 L189.2 195.8 L191.4 193.5 L193.7 191.2 L195.9 188.9 L198.2 186.6 L200.5 184.4 L202.9 182.1 L205.2 179.9 L207.6 177.7 L210.0 175.6 L212.4 173.4 L214.8 171.3 L217.2 169.2 L219.7 167.1 L222.1 165.0 L224.6 163.0 L227.1 160.9 L229.6 158.9 L232.2 157.0 L234.7 155.0 L237.3 153.1 L239.9 151.2 L242.5 149.3 L245.1 147.4 L247.7 145.6 L250.3 143.7 L253.0 142.0 L255.6 140.2 L258.3 138.4 L261.0 136.7 L263.7 135.0 L266.4 133.3 L269.2 131.7 L271.9 130.1 L274.7 128.5 L277.4 126.9 L280.2 125.3 L283.0 123.8 L285.8 122.3 L288.6 120.8 L291.5 119.4 L294.3 117.9 L297.1 116.5 L300.0 115.1 L302.9 113.8 L305.8 112.5 L308.7 111.2 L311.6 109.9 L314.5 108.6 L317.4 107.4 L320.3 106.2 L323.3 105.0 L326.2 103.9 L329.2 102.8 L332.1 101.7 L335.1 100.6 L338.1 99.6 L341.1 98.6 L344.1 97.6 L347.1 96.6 L350.1 95.7 L353.1 94.8 L356.2 93.9 L359.2 93.1 L362.2 92.2 L365.3 91.4 L368.3 90.7 L371.4 89.9 L374.5 89.2 L377.5 88.5 L380.6 87.9 L383.7 87.3 L386.8 86.6 L389.9 86.1 L393.0 85.5 L396.1 85.0 L399.2 84.5 L402.3 84.1 L405.4 83.6 L408.5 83.2 L411.6 82.8 L414.7 82.5 L417.9 82.2 L421.0 81.9 L424.1 81.6 L427.2 81.4"/>
<path class="ring" d="M472.9 266.7 L474.5 266.9 L476.1 267.1 L477.7 267.3 L479.3 267.5 L480.8 267.8 L482.4 268.0 L484.0 268.3 L485.5 268.6 L487.1 268.9 L488.7 269.2 L490.2 269.5 L491.8 269.9 L493.3 270.2 L494.9 270.6 L496.4 271.0 L498.0 271.4 L499.5 271.8 L501.1 272.2 L502.6 272.7 L504.1 273.1 L505.7 273.6 L507.2 274.1 L508.7 274.6 L510.2 275.1 L511.7 275.6 L513.2 276.1 L514.7 276.7 L516.2 277.2 L517.7 277.8 L519.2 278.4 L520.7 279.0 L522.2 279.6 L523.6 280.2 L525.1 280.9 L526.6 281.5 L528.0 282.2 L529.5 282.9 L530.9 283.5 L532.4 284.2 L533.8 285.0 L535.2 285.7 L536.6 286.4 L538.1 287.2 L539.5 287.9 L540.9 288.7 L542.3 289.5 L543.7 290.3 L545.0 291.1 L546.4 292.0 L547.8 292.8 L549.2 293.6 L550.5 294.5 L551.9 295.4 L553.2 296.3 L554.5 297.2 L555.9 298.1 L557.2 299.0 L558.5 299.9 L559.8 300.9 L561.1 301.8 L562.4 302.8 L563.7 303.8 L564.9 304.8 L566.2 305.8 L567.4 306.8 L568.7 307.8 L569.9 308.8 L571.2 309.9 L572.4 310.9 L573.6 312.0 L574.8 313.1 L576.0 314.2 L577.2 315.3 L578.3 316.4 L579.5 317.5 L580.7 318.6 L581.8 319.7 L583.0 320.9 L584.1 322.0 L585.2 323.2 L586.3 324.4 L587.4 325.6 L588.5 326.8 L589.6 328.0 L590.6 329.2 L591.7 330.4 L592.7 331.7 L593.8 332.9 L594.8 334.1 L595.8 335.4 L596.8 336.7 L597.8 338.0 L598.8 339.2 L599.8 340.5 L600.7 341.8 L601.7 343.2 L602.6 344.5 L603.6 345.8 L604.5 347.1 L605.4 348.5 L606.3 349.8 L607.2 351.2 L608.0 352.6 L608.9 353.9 L609.8 355.3 L610.6 356.7 L611.4 358.1 L612.2 359.5 L613.0 360.9 L613.8 362.3 L614.6 363.8 L615.4 365.2 L616.1 366.6 L616.9 368.1 L617.6 369.5 L618.3 371.0 L619.0 372.4 L619.7 373.9 L620.4 375.4 L621.0 376.9 L621.7 378.3 L622.3 379.8 L623.0 381.3 L623.6 382.8 L624.2 384.3 L624.8 385.8 L625.4 387.4 L625.9 388.9 L626.5 390.4 L627.0 391.9 L627.5 393.5 L628.0 395.0 L628.5 396.6 L629.0 398.1 L629.5 399.7 L630.0 401.2 L630.4 402.8 L630.8 404.3 L631.3 405.9 L631.7 407.5 L632.1 409.0 L632.4 410.6 L632.8 412.2 L633.1 413.8 L633.5 415.4 L633.8 416.9 L634.1 418.5 L634.4 420.1 L634.7 421.7 L635.0 423.3 L635.2 424.9 L635.5 426.5 L635.7 428.1 L635.9 429.7 L636.1 431.3 L636.3 432.9 L636.5 434.6 L636.6 436.2 L636.8 437.8 L636.9 439.4 L637.0 441.0 L637.1 442.6 L637.2 444.2 L637.3 445.9 L637.3 447.5 L637.4 449.1 L637.4 450.7 L637.4 452.3 L637.4 453.9 L637.4 455.5 L637.4 457.2 L637.3 458.8 L637.3 460.4 L637.2 462.0 L637.1 463.6 L637.0 465.2 L636.9 466.8 L636.8 468.5 L636.7 470.1 L636.5 471.7 L636.4 473.3 L636.2 474.9 L636.0 476.5 L635.8 478.1 L635.5 479.7 L635.3 481.3 L635.1 482.9 L634.8 484.5 L634.5 486.0 L634.2 487.6 L633.9 489.2 L633.6 490.8 L633.3 492.4 L632.9 493.9 L632.5 495.5 L632.2 497.1 L631.8 498.6 L631.4 500.2 L631.0 501.7 L630.5 503.3 L630.1 504.8 L629.6 506.4 L629.1 507.9 L628.7 509.5 L628.2 511.0 L627.6 512.5 L627.1 514.0 L626.6 515.6 L626.0 517.1 L625.5 518.6 L624.9 520.1 L624.3 521.6 L623.7 523.1 L623.1 524.5 L622.4 526.0 L621.8 527.5 L621.1 529.0 L620.4 530.4 L619.7 531.9 L619.0 533.3 L618.3 534.8 L617.6 536.2 L616.9 537.6 L616.1 539.1 L615.4 540.5 L614.6 541.9 L613.8 543.3 L613.0 544.7 L612.2 546.1 L611.3 547.5 L610.5 548.8 L609.7 550.2 L608.8 551.6 L607.9 552.9 L607.0 554.3 L606.1 555.6 L605.2 556.9 L604.3 558.2 L603.4 559.6 L602.4 560.9 L601.4 562.2 L600.5 563.4 L599.5 564.7 L598.5 566.0 L597.5 567.3 L596.5 568.5 L595.4 569.7 L594.4 571.0 L593.4 572.2 L592.3 573.4 L591.2 574.6 L590.1 575.8 L589.0 577.0 L587.9 578.2 L586.8 579.4 L585.7 580.5 L584.6 581.7 L583.4 582.8 L582.3 583.9 L581.1 585.0 L579.9 586.1 L578.7 587.2 L577.5 588.3 L576.3 589.4 L575.1 590.5 L573.9 591.5 L572.6 592.6 L571.4 593.6 L570.1 594.6 L568.9 595.6 L567.6 596.6 L566.3 597.6 L565.0 598.6 L563.7 599.6 L562.4 600.5 L561.1 601.5 L559.8 602.4 L558.4 603.3 L557.1 604.2 L555.7 605.1 L554.4 606.0 L553.0 606.9 L551.6 607.8 L550.2 608.6 L548.8 609.4 L547.4 610.3 L546.0 611.1 L544.6 611.9 L543.2 612.7 L541.8 613.5 L540.3 614.2 L538.9 615.0 L537.4 615.7 L536.0 616.4 L534.5 617.2 L533.1 617.9 L531.6 618.5 L530.1 619.2 L528.6 619.9 L527.1 620.5 L525.6 621.2 L524.1 621.8 L522.6 622.4 L521.1 623.0 L519.6 623.6 L518.0 624.2 L516.5 624.7 L515.0 625.3 L513.4 625.8 L511.9 626.3 L510.3 626.8 L508.7 627.3 L507.2 627.8 L505.6 628.3 L504.0 628.7 L502.5 629.2 L500.9 629.6 L499.3 630.0 L497.7 630.4 L496.1 630.8 L494.5 631.2 L492.9 631.5 L491.3 631.9 L489.7 632.2 L488.1 632.5 L486.5 632.8 L484.9 633.1 L483.3 633.4 L481.7 633.6 L480.1 633.9 L478.4 634.1 L476.8 634.3 L475.2 634.5 L473.6 634.7 L471.9 634.9 L470.3 635.0 L468.7 635.2 L467.0 635.3 L465.4 635.4 L463.8 635.6 L462.1 635.6 L460.5 635.7 L458.9 635.8 L457.2 635.8 L455.6 635.9 L453.9 635.9 L452.3 635.9 L450.7 635.9 L449.0 635.9 L447.4 635.8 L445.7 635.8 L444.1 635.7 L442.5 635.6 L440.8 635.6 L439.2 635.4 L437.6 635.3 L435.9 635.2 L434.3 635.0 L432.7 634.9 L431.0 634.7 L429.4 634.5 L427.8 634.3 L426.2 634.1 L424.5 633.9 L422.9 633.6 L421.3 633.4 L419.7 633.1 L418.1 632.8 L416.5 632.5 L414.9 632.2 L413.3 631.9 L411.7 631.5 L410.1 631.2 L408.5 630.8 L406.9 630.4 L405.3 630.0 L403.7 629.6 L402.1 629.2 L400.6 628.7 L399.0 628.3 L397.4 627.8 L395.9 627.3 L394.3 626.8 L392.7 626.3 L391.2 625.8 L389.6 625.3 L388.1 624.7 L386.6 624.2 L385.0 623.6 L383.5 623.0 L382.0 622.4 L380.5 621.8 L379.0 621.2 L377.5 620.5 L376.0 619.9 L374.5 619.2 L373.0 618.5 L371.5 617.9 L370.1 617.2 L368.6 616.4 L367.2 615.7 L365.7 615.0 L364.3 614.2 L362.8 613.5 L361.4 612.7 L360.0 611.9 L358.6 611.1 L357.2 610.3 L355.8 609.4 L354.4 608.6 L353.0 607.8 L351.6 606.9 L350.2 606.0 L348.9 605.1 L347.5 604.2 L346.2 603.3 L344.8 602.4 L343.5 601.5 L342.2 600.5 L340.9 599.6 L339.6 598.6 L338.3 597.6 L337.0 596.6 L335.7 595.6 L334.5 594.6 L333.2 593.6 L332.0 592.6 L330.7 591.5 L329.5 590.5 L328.3 589.4 L327.1 588.3 L325.9 587.2 L324.7 586.1 L323.5 585.0 L322.3 583.9 L321.2 582.8 L320.0 581.7 L318.9 580.5 L317.8 579.4 L316.7 578.2 L315.6 577.0 L314.5 575.8 L313.4 574.6 L312.3 573.4 L311.2 572.2 L310.2 571.0 L309.2 569.7 L308.1 568.5 L307.1 567.3 L306.1 566.0 L305.1 564.7 L304.1 563.4 L303.2 562.2 L302.2 560.9 L301.2 559.6 L300.3 558.2 L299.4 556.9 L298.5 555.6 L297.6 554.3 L296.7 552.9 L295.8 551.6 L294.9 550.2 L294.1 548.8 L293.3 547.5 L292.4 546.1 L291.6 544.7 L290.8 543.3 L290.0 541.9 L289.2 540.5 L288.5 539.1 L287.7 537.6 L287.0 536.2 L286.3 534.8 L285.6 533.3 L284.9 531.9 L284.2 530.4 L283.5 529.0 L282.8 527.5 L282.2 526.0 L281.5 524.5 L280.9 523.1 L280.3 521.6 L279.7 520.1 L279.1 518.6 L278.6 517.1 L278.0 515.6 L277.5 514.0 L277.0 512.5 L276.4 511.0 L275.9 509.5 L275.5 507.9 L275.0 506.4 L274.5 504.8 L274.1 503.3 L273.6 501.7 L273.2 500.2 L272.8 498.6 L272.4 497.1 L272.1 495.5 L271.7 493.9 L271.3 492.4 L271.0 490.8 L270.7 489.2 L270.4 487.6 L270.1 486.0 L269.8 484.5 L269.5 482.9 L269.3 481.3 L269.1 479.7 L268.8 478.1 L268.6 476.5 L268.4 474.9 L268.2 473.3 L268.1 471.7 L267.9 470.1 L267.8 468.5 L267.7 466.8 L267.6 465.2 L267.5 463.6 L267.4 462.0 L267.3 460.4 L267.3 458.8 L267.2 457.2 L267.2 455.5 L267.2 453.9 L267.2 452.3 L267.2 450.7 L267.2 449.1 L267.3 447.5 L267.3 445.9 L267.4 444.2 L267.5 442.6 L267.6 441.0 L267.7 439.4 L267.8 437.8 L268.0 436.2 L268.1 434.6 L268.3 432.9 L268.5 431.3 L268.7 429.7 L268.9 428.1 L269.1 426.5 L269.4 424.9 L269.6 423.3 L269.9 421.7 L270.2 420.1 L270.5 418.5 L270.8 416.9 L271.1 415.4 L271.5 413.8 L271.8 412.2 L272.2 410.6 L272.5 409.0 L272.9 407.5 L273.3 405.9 L273.8 404.3 L274.2 402.8 L274.6 401.2 L275.1 399.7 L275.6 398.1 L276.1 396.6 L276.6 395.0 L277.1 393.5 L277.6 391.9 L278.1 390.4 L278.7 388.9 L279.2 387.4 L279.8 385.8 L280.4 384.3 L281.0 382.8 L281.6 381.3 L282.3 379.8 L282.9 378.3 L283.6 376.9 L284.2 375.4 L284.9 373.9 L285.6 372.4 L286.3 371.0 L287.0 369.5 L287.7 368.1 L288.5 366.6 L289.2 365.2 L290.0 363.8 L290.8 362.3 L291.6 360.9 L292.4 359.5 L293.2 358.1 L294.0 356.7 L294.8 355.3 L295.7 353.9 L296.6 352.6 L297.4 351.2 L298.3 349.8 L299.2 348.5 L300.1 347.1 L301.0 345.8 L302.0 344.5 L302.9 343.2 L303.9 341.8 L304.8 340.5 L305.8 339.2 L306.8 338.0 L307.8 336.7 L308.8 335.4 L309.8 334.1 L310.8 332.9 L311.9 331.7 L312.9 330.4 L314.0 329.2 L315.0 328.0 L316.1 326.8 L317.2 325.6 L318.3 324.4 L319.4 323.2 L320.5 322.0 L321.6 320.9 L322.8 319.7 L323.9 318.6 L325.1 317.5 L326.3 316.4 L327.4 315.3 L328.6 314.2 L329.8 313.1 L331.0 312.0 L332.2 310.9 L333.4 309.9 L334.7 308.8 L335.9 307.8 L337.2 306.8 L338.4 305.8 L339.7 304.8 L340.9 303.8 L342.2 302.8 L343.5 301.8 L344.8 300.9 L346.1 299.9 L347.4 299.0 L348.7 298.1 L350.1 297.2 L351.4 296.3 L352.7 295.4 L354.1 294.5 L355.4 293.6 L356.8 292.8 L358.2 292.0 L359.6 291.1 L360.9 290.3 L362.3 289.5 L363.7 288.7 L365.1 287.9 L366.5 287.2 L368.0 286.4 L369.4 285.7 L370.8 285.0 L372.2 284.2 L373.7 283.5 L375.1 282.9 L376.6 282.2 L378.0 281.5 L379.5 280.9 L381.0 280.2 L382.4 279.6 L383.9 279.0 L385.4 278.4 L386.9 277.8 L388.4 277.2 L389.9 276.7 L391.4 276.1 L392.9 275.6 L394.4 275.1 L395.9 274.6 L397.4 274.1 L398.9 273.6 L400.5 273.1 L402.0 272.7 L403.5 272.2 L405.1 271.8 L406.6 271.4 L408.2 271.0 L409.7 270.6 L411.3 270.2 L412.8 269.9 L414.4 269.5 L415.9 269.2 L417.5 268.9 L419.1 268.6 L420.6 268.3 L422.2 268.0 L423.8 267.8 L425.3 267.5 L426.9 267.3 L428.5 267.1 L430.1 266.9 L431.7 266.7"/>
</g>
<rect x="846" y="45" width="54" height="762" fill="#000"/>
<text x="431.2" y="84.2" class="nmi">100 NMI</text>
<text x="433.6" y="269.2" class="nmi">50 <tspan letter-spacing="0.7">NMI</tspan></text>
<text x="715.5" y="15" class="hdr">NEXLAB-College of DuPage</text>
<path d="M888.5 15 V6.5 H895 M894.3 6.8 L890.5 10.5 L894 14" fill="none" stroke="#ff0" stroke-width="1.1" shape-rendering="crispEdges"/><path d="M895 11.8 V15 H891.8 Z M895 6 V7.6 L893.4 6 Z" fill="#ff0"/>
<text x="863" y="64" class="lab">NIDS</text>
<text x="814" y="74" class="lab">[kg/m2]</text>
<rect x="873.5" y="87.5" width="20" height="714" fill="#000" stroke="#868686" stroke-width="1"/>
<rect x="875" y="89" width="17" height="91" fill="url(#g0)"/><rect x="875" y="180" width="17" height="89" fill="url(#g1)"/><rect x="875" y="269" width="17" height="89" fill="url(#g2)"/><rect x="875" y="358" width="17" height="89" fill="url(#g3)"/><rect x="875" y="447" width="17" height="90" fill="url(#g4)"/><rect x="875" y="537" width="17" height="89" fill="url(#g5)"/><rect x="875" y="626" width="17" height="89" fill="url(#g6)"/><text x="859.4" y="785.1" class="lab2">0</text><text x="859.4" y="744.1" class="lab2">5</text><text x="851.4 859.4" y="703.1" class="lab2">10</text><text x="851.4 859.4" y="662.1" class="lab2">15</text><text x="851.4 859.4" y="621.1" class="lab2">20</text><text x="851.4 859.4" y="580.1" class="lab2">25</text><text x="851.4 859.4" y="539.1" class="lab2">30</text><text x="851.4 859.4" y="498.1" class="lab2">35</text><text x="851.4 859.4" y="457.1" class="lab2">40</text><text x="851.4 859.4" y="416.1" class="lab2">45</text><text x="851.4 859.4" y="375.1" class="lab2">50</text><text x="851.4 859.4" y="334.1" class="lab2">55</text><text x="851.4 859.4" y="293.1" class="lab2">60</text><text x="851.4 859.4" y="252.1" class="lab2">65</text><text x="851.4 859.4" y="211.1" class="lab2">70</text><text x="851.4 859.4" y="170.1" class="lab2">75</text><text x="851.4 859.4" y="129.1" class="lab2">80</text>
<text transform="translate(162,897) scale(1.282,1)" x="0.00 7.02 14.04 21.06 28.08 35.10 42.12 49.14 56.16 63.18 70.20 77.22 84.24 91.26 98.28 105.30 112.32 119.34 126.36 133.38 140.40 147.42 154.44 161.46 168.48 175.50 182.52 189.54 196.56 203.58 210.60 217.62 224.64 231.66 238.68 245.70 252.72 259.74 266.76 273.78 280.80 287.82 294.84 301.86 308.88 315.90 322.92 329.94 336.96 343.98 351.00 358.02 365.04 372.06 379.08 386.10 393.12 400.14 407.16 414.18 421.45 428.22 435.24 442.51 449.28" y="0" class="ttl">DIGITAL VERTICALLY INTEGRATED LIQUID (VIL) - KAEC 19 OCT 25 <tspan class="z">0</tspan>8:<tspan class="z">0</tspan>6</text>
</svg>
</body></html>
